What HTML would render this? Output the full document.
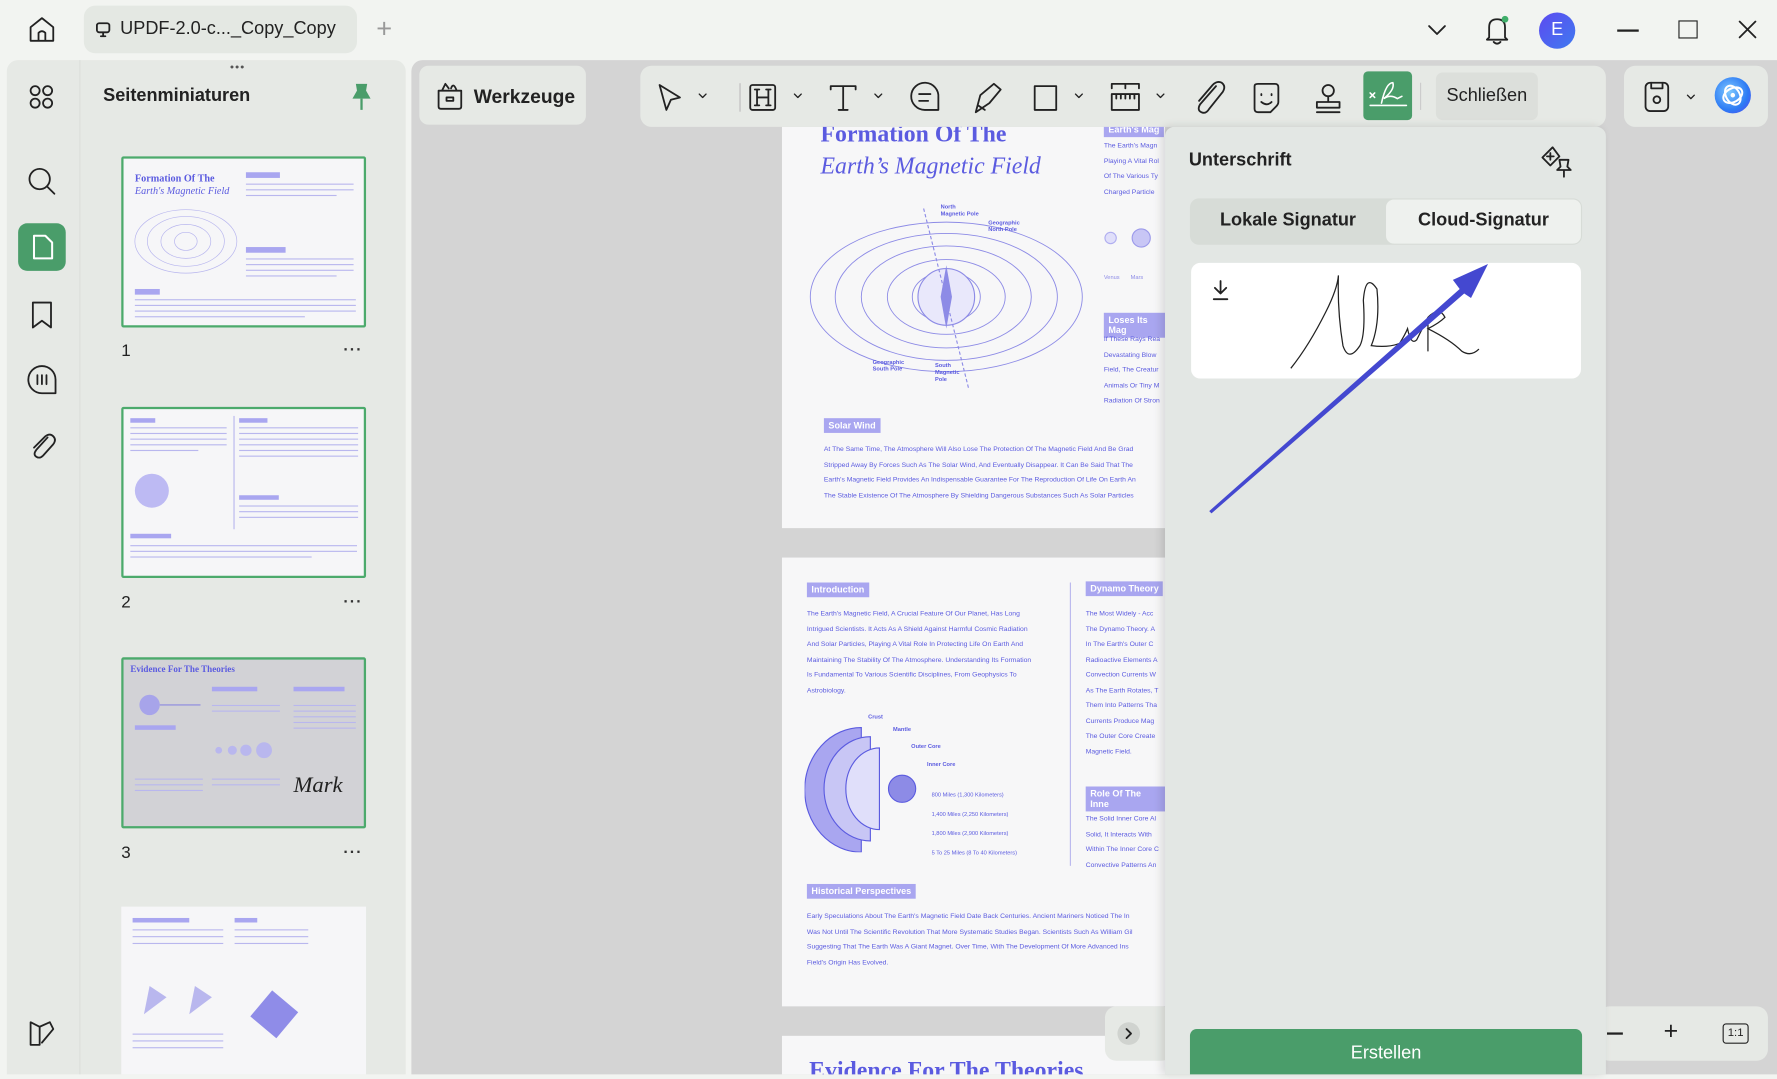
<!DOCTYPE html>
<html><head><meta charset="utf-8">
<style>
*{box-sizing:border-box;margin:0;padding:0}
html,body{width:1777px;height:1074px;overflow:hidden;background:#f2f4f1;font-family:"Liberation Sans",sans-serif}
#w{position:absolute;left:0;top:0;width:1568px;height:948px;transform:scale(1.13329);transform-origin:0 0;background:#f2f4f1}
.a{position:absolute}
.ic{stroke:#222;fill:none;stroke-width:1.6;stroke-linecap:round;stroke-linejoin:round}
.pt{color:#5b5be0;font-size:6px;line-height:13.5px}
.lbl{background:#a9a6f0;color:#fff;font-size:8px;font-weight:bold;padding:2px 4px}
.th{position:absolute;left:107px;width:216px;background:#f6f6f8;border:2px solid #4caa6c;border-radius:2px;overflow:hidden}
.ln{position:absolute;height:2px;background:#b9b7ee}
.num{position:absolute;left:107px;font-size:15px;color:#222}
.dots{position:absolute;left:303px;font-size:14px;color:#333;letter-spacing:1px;font-weight:bold}
</style></head><body><div id="w">
<!-- top bar -->
<svg class="a" style="left:24px;top:13px" width="26" height="26" viewBox="0 0 26 26"><path class="ic" d="M3 11 L13 3 L23 11 V23 H3 Z M10 23 V16 Q13 13 16 16 V23"/></svg>
<div class="a" style="left:74px;top:5px;width:241px;height:42px;background:#e4e8e3;border-radius:10px"></div>
<svg class="a" style="left:84px;top:19px" width="14" height="14" viewBox="0 0 14 14"><rect class="ic" x="1.5" y="1.5" width="11" height="8" rx="2" stroke-width="1.2"/><path class="ic" d="M7 10v3M5 13h4" stroke-width="1.2"/></svg>
<div class="a" style="left:106px;top:17px;font-size:16px;color:#222">UPDF-2.0-c..._Copy_Copy</div>
<div class="a" style="left:332px;top:12px;font-size:24px;color:#999;font-weight:300">+</div>
<svg class="a" style="left:1259px;top:20px" width="18" height="14"><path class="ic" d="M2 3l7 7 7-7" stroke-width="1.4"/></svg>
<svg class="a" style="left:1308px;top:12px" width="26" height="30" viewBox="0 0 26 30"><path class="ic" d="M6 21 V12 Q6 5 13 5 Q20 5 20 12 V21 L22 23 H4 Z M10 25 Q13 28 16 25" stroke-width="1.4"/><circle cx="20" cy="5" r="3" fill="#3fae6a"/></svg>
<div class="a" style="left:1358px;top:11px;width:32px;height:32px;border-radius:50%;background:linear-gradient(135deg,#5d4af0,#3f7af0);color:#fff;font-size:16px;text-align:center;line-height:32px">E</div>
<div class="a" style="left:1427px;top:26px;width:19px;height:1.5px;background:#222"></div>
<div class="a" style="left:1481px;top:18px;width:17px;height:16px;border:1.5px solid #222"></div>
<svg class="a" style="left:1533px;top:17px" width="18" height="18"><path class="ic" d="M2 2l14 14M16 2L2 16" stroke-width="1.4"/></svg>

<!-- left panel -->
<div class="a" style="left:6px;top:53px;width:352px;height:895px;background:#e6e9e5;border-radius:10px 10px 0 0"></div>
<div class="a" style="left:70px;top:53px;width:1px;height:895px;background:#dcdfdb"></div>
<svg class="a" style="left:24px;top:73px" width="26" height="26" viewBox="0 0 26 26"><g class="ic" stroke-width="1.4"><rect x="3" y="3" width="8" height="8" rx="4"/><rect x="14" y="3" width="8" height="8" rx="4"/><rect x="3" y="14" width="8" height="8" rx="4"/><rect x="14" y="14" width="8" height="8" rx="4"/></g></svg>
<svg class="a" style="left:23px;top:146px" width="28" height="28"><circle class="ic" cx="12" cy="12" r="9"/><path class="ic" d="M19 19l6 6"/></svg>
<div class="a" style="left:16px;top:197px;width:42px;height:42px;background:#4a9d6a;border-radius:8px"></div>
<svg class="a" style="left:25px;top:206px" width="24" height="24"><path d="M5 2H15L21 8V22H5Z" fill="none" stroke="#fff" stroke-width="1.8" stroke-linejoin="round"/></svg>
<svg class="a" style="left:26px;top:265px" width="22" height="26"><path class="ic" d="M3 2H19V24L11 18L3 24Z"/></svg>
<svg class="a" style="left:22px;top:320px" width="30" height="30"><path class="ic" d="M15 3A12 12 0 1 0 15 27H27V15A12 12 0 0 0 15 3ZM11 11V19M15 11V19M19 11V19"/></svg>
<svg class="a" style="left:24px;top:380px" width="28" height="28"><path class="ic" d="M18 6L8 17Q5 21 8 23Q11 25 14 22L23 12Q26 8 23 5Q20 2 16 5L6 15"/></svg>
<svg class="a" style="left:24px;top:898px" width="26" height="26"><path class="ic" d="M3 24V4L11 8V24ZM11 8L20 4L23 10L13 22"/></svg>
<div class="a" style="left:203px;top:54px;font-size:10px;color:#555;letter-spacing:1px">&#8226;&#8226;&#8226;</div>
<div class="a" style="left:91px;top:76px;font-size:16px;font-weight:bold;color:#222">Seitenminiaturen</div>
<svg class="a" style="left:309px;top:72px" width="20" height="26"><path d="M5 2H15L14 8L18 15H2L6 8Z" fill="#4a9d6a"/><path d="M10 15V25" stroke="#4a9d6a" stroke-width="2"/></svg>

<div class="th" style="top:138px;height:151px">
 <div class="a" style="left:10px;top:12px;color:#5b5be0;font:bold 9px 'Liberation Serif',serif">Formation Of The</div>
 <div class="a" style="left:10px;top:23px;color:#5b5be0;font:italic 9px 'Liberation Serif',serif">Earth's Magnetic Field</div>
 <svg class="a" style="left:5px;top:35px" width="100" height="75"><g fill="none" stroke="#b7b5ee" stroke-width="0.6"><ellipse cx="50" cy="38" rx="45" ry="28"/><ellipse cx="50" cy="38" rx="34" ry="22"/><ellipse cx="50" cy="38" rx="22" ry="15"/><ellipse cx="50" cy="38" rx="10" ry="8"/></g></svg>
 <div class="ln" style="left:108px;top:12px;width:30px;height:5px;background:#a9a6f0"></div>
 <div class="ln" style="left:108px;top:22px;width:95px;height:1px"></div><div class="ln" style="left:108px;top:27px;width:95px;height:1px"></div><div class="ln" style="left:108px;top:32px;width:80px;height:1px"></div>
 <div class="ln" style="left:108px;top:78px;width:35px;height:5px;background:#a9a6f0"></div>
 <div class="ln" style="left:108px;top:88px;width:95px;height:1px"></div><div class="ln" style="left:108px;top:93px;width:95px;height:1px"></div><div class="ln" style="left:108px;top:98px;width:95px;height:1px"></div><div class="ln" style="left:108px;top:103px;width:80px;height:1px"></div>
 <div class="ln" style="left:10px;top:115px;width:22px;height:5px;background:#a9a6f0"></div>
 <div class="ln" style="left:10px;top:124px;width:195px;height:1px"></div><div class="ln" style="left:10px;top:129px;width:195px;height:1px"></div><div class="ln" style="left:10px;top:134px;width:195px;height:1px"></div><div class="ln" style="left:10px;top:139px;width:150px;height:1px"></div>
</div>
<div class="num" style="top:301px">1</div><div class="dots" style="top:300px">···</div>
<div class="th" style="top:359px;height:151px">
 <div class="a" style="left:97px;top:6px;width:1px;height:100px;background:#b9b7ee"></div>
 <div class="ln" style="left:6px;top:8px;width:22px;height:4px;background:#a9a6f0"></div>
 <div class="ln" style="left:6px;top:16px;width:85px;height:1px"></div><div class="ln" style="left:6px;top:21px;width:85px;height:1px"></div><div class="ln" style="left:6px;top:26px;width:85px;height:1px"></div><div class="ln" style="left:6px;top:31px;width:85px;height:1px"></div><div class="ln" style="left:6px;top:36px;width:60px;height:1px"></div>
 <svg class="a" style="left:5px;top:52px" width="40" height="40"><circle cx="20" cy="20" r="15" fill="#bdbaf3"/></svg>
 <div class="ln" style="left:102px;top:8px;width:25px;height:4px;background:#a9a6f0"></div>
 <div class="ln" style="left:102px;top:16px;width:105px;height:1px"></div><div class="ln" style="left:102px;top:21px;width:105px;height:1px"></div><div class="ln" style="left:102px;top:26px;width:105px;height:1px"></div><div class="ln" style="left:102px;top:31px;width:105px;height:1px"></div><div class="ln" style="left:102px;top:36px;width:105px;height:1px"></div><div class="ln" style="left:102px;top:41px;width:105px;height:1px"></div>
 <div class="ln" style="left:102px;top:76px;width:35px;height:4px;background:#a9a6f0"></div>
 <div class="ln" style="left:102px;top:85px;width:105px;height:1px"></div><div class="ln" style="left:102px;top:90px;width:105px;height:1px"></div><div class="ln" style="left:102px;top:95px;width:105px;height:1px"></div>
 <div class="ln" style="left:6px;top:110px;width:36px;height:4px;background:#a9a6f0"></div>
 <div class="ln" style="left:6px;top:120px;width:200px;height:1px"></div><div class="ln" style="left:6px;top:125px;width:200px;height:1px"></div><div class="ln" style="left:6px;top:130px;width:160px;height:1px"></div>
</div>
<div class="num" style="top:523px">2</div><div class="dots" style="top:522px">···</div>
<div class="th" style="top:580px;height:151px;background:#d2d2d6">
 <div class="a" style="left:6px;top:4px;color:#5b5be0;font:bold 8px 'Liberation Serif',serif">Evidence For The Theories</div>
 <div class="ln" style="left:78px;top:24px;width:40px;height:4px;background:#a9a6f0"></div>
 <div class="ln" style="left:150px;top:24px;width:45px;height:4px;background:#a9a6f0"></div>
 <svg class="a" style="left:8px;top:28px" width="60" height="24"><circle cx="15" cy="12" r="9" fill="#a7a4ea"/><path d="M24 12H60" stroke="#8b88e0"/></svg>
 <div class="ln" style="left:10px;top:58px;width:36px;height:4px;background:#a9a6f0"></div>
 <svg class="a" style="left:78px;top:70px" width="60" height="20"><g fill="#b9b7ee"><circle cx="6" cy="10" r="3"/><circle cx="18" cy="10" r="4"/><circle cx="30" cy="10" r="5"/><circle cx="46" cy="10" r="7"/></g></svg>
 <div class="a" style="left:150px;top:100px;font:italic 20px 'Liberation Serif',serif;color:#222">Mark</div>
 <div class="ln" style="left:78px;top:40px;width:60px;height:1px"></div><div class="ln" style="left:78px;top:45px;width:60px;height:1px"></div><div class="ln" style="left:150px;top:40px;width:55px;height:1px"></div><div class="ln" style="left:150px;top:45px;width:55px;height:1px"></div><div class="ln" style="left:150px;top:50px;width:55px;height:1px"></div><div class="ln" style="left:150px;top:55px;width:55px;height:1px"></div><div class="ln" style="left:150px;top:60px;width:55px;height:1px"></div>
 <div class="ln" style="left:10px;top:105px;width:60px;height:1px"></div><div class="ln" style="left:10px;top:110px;width:60px;height:1px"></div><div class="ln" style="left:10px;top:115px;width:60px;height:1px"></div><div class="ln" style="left:78px;top:105px;width:60px;height:1px"></div><div class="ln" style="left:78px;top:110px;width:60px;height:1px"></div>
</div>
<div class="num" style="top:744px">3</div><div class="dots" style="top:743px">···</div>
<div class="a" style="left:107px;top:800px;width:216px;height:148px;background:#f6f6f8">
 <div class="ln" style="left:10px;top:10px;width:50px;height:4px;background:#a9a6f0"></div><div class="ln" style="left:100px;top:10px;width:20px;height:4px;background:#a9a6f0"></div>
 <div class="ln" style="left:10px;top:20px;width:80px;height:1px"></div><div class="ln" style="left:10px;top:26px;width:80px;height:1px"></div><div class="ln" style="left:10px;top:32px;width:80px;height:1px"></div><div class="ln" style="left:100px;top:20px;width:65px;height:1px"></div><div class="ln" style="left:100px;top:26px;width:65px;height:1px"></div><div class="ln" style="left:100px;top:32px;width:65px;height:1px"></div>
 <svg class="a" style="left:10px;top:60px" width="160" height="80"><g fill="#b9b7ee"><path d="M10 35L30 20L15 10Z"/><path d="M50 35L70 20L55 10Z"/><rect x="110" y="20" width="30" height="30" transform="rotate(40 125 35)" fill="#8f8ce8"/></g></svg>
 <div class="ln" style="left:10px;top:112px;width:80px;height:1px"></div><div class="ln" style="left:10px;top:118px;width:80px;height:1px"></div><div class="ln" style="left:10px;top:124px;width:80px;height:1px"></div>
</div>

<!-- main area -->
<div class="a" style="left:363px;top:53px;width:1205px;height:895px;background:#d4d4d4;border-radius:10px 0 0 0"></div>
<div class="a" style="left:370px;top:58px;width:147px;height:52px;background:#e6e9e5;border-radius:8px"></div>
<svg class="a" style="left:384px;top:70px" width="26" height="28"><path class="ic" d="M3 10H23V24Q23 26 21 26H5Q3 26 3 24ZM10 16H16V19H10ZM6 10L9 4L12 8M14 8Q16 2 19 10" stroke-width="1.4"/></svg>
<div class="a" style="left:418px;top:76px;font-size:17px;font-weight:bold;color:#222">Werkzeuge</div>

<div class="a" style="left:565px;top:58px;width:852px;height:54px;background:#e6e9e5;border-radius:10px"></div>
<svg class="a" style="left:575px;top:66px" width="800" height="40" viewBox="0 0 800 40">
<g class="ic" stroke-width="1.5">
<path d="M7 9L25 20L17 22L13 31Z"/><path d="M42 17l3 3 3-3" stroke-width="1.2"/>
<path d="M78 8V32" stroke="#ccc"/>
<rect x="87" y="9" width="22" height="22" rx="2"/><path d="M93 13V27M103 13V27M93 20H103M91 13H95M101 13H105M91 27H95M101 27H105"/><path d="M126 17l3 3 3-3" stroke-width="1.2"/>
<path d="M158 10H180M169 10V31M165 31H173M158 10V13M180 10V13"/><path d="M197 17l3 3 3-3" stroke-width="1.2"/>
<path d="M241 31A12 12 0 1 1 253 20V31ZM236 17H246M236 23H244"/>
<path d="M286 33L290 18L302 8L308 13L298 25ZM288 27L294 31"/>
<rect x="338" y="10" width="19" height="21"/><path d="M374 17l3 3 3-3" stroke-width="1.2"/>
<path d="M406 8H430M406 8V12M430 8V12M418 8V12M406 17H430V31H406ZM410 17V21M414 17V21M418 17V21M422 17V21M426 17V21"/><path d="M446 17l3 3 3-3" stroke-width="1.2"/>
<path d="M498 10L484 26Q481 31 485 33Q489 35 492 30L504 15Q507 10 503 7Q499 5 495 9L483 23"/>
<path d="M532 10Q532 8 535 8H550Q553 8 553 11V24Q553 26 551 28L546 33H535Q532 33 532 30ZM538 17V18M547 17V18M538 24Q543 28 547 24"/>
<circle cx="597" cy="14" r="5"/><path d="M597 19V24M587 24H607V29H587ZM587 33H607"/>
</g>
</svg>
<div class="a" style="left:1203px;top:63px;width:43px;height:43px;background:#4a9d6a;border-radius:4px"></div>
<svg class="a" style="left:1203px;top:63px" width="43" height="43"><g fill="none" stroke="#fff" stroke-width="1.4" stroke-linecap="round"><path d="M6 19l4 4M10 19l-4 4"/><path d="M16 28Q20 10 26 10Q28 16 18 24Q24 20 30 24L34 22"/><path d="M6 30H38"/></g></svg>
<div class="a" style="left:1253px;top:73px;width:1px;height:24px;background:#ccc"></div>
<div class="a" style="left:1267px;top:64px;width:90px;height:42px;background:#dcdfdb;border-radius:6px;font-size:16px;color:#222;text-align:center;line-height:42px">Schließen</div>

<div class="a" style="left:1433px;top:58px;width:127px;height:54px;background:#e6e9e5;border-radius:10px"></div>
<svg class="a" style="left:1448px;top:70px" width="60" height="30"><g class="ic" stroke-width="1.4"><rect x="4" y="3" width="20" height="25" rx="4"/><path d="M9 3V8H19V3"/><circle cx="14" cy="18" r="3"/><path d="M41 14l3 3 3-3" stroke-width="1.2"/></g></svg>
<div class="a" style="left:1513px;top:68px;width:32px;height:32px;border-radius:50%;background:radial-gradient(circle at 40% 40%,#7ec8ff,#2d7bf4 60%,#5a3ef0)"></div>
<svg class="a" style="left:1513px;top:68px" width="32" height="32"><g fill="none" stroke="#fff" stroke-width="1.8"><ellipse cx="16" cy="16" rx="9" ry="6" transform="rotate(-30 16 16)"/><ellipse cx="16" cy="16" rx="9" ry="6" transform="rotate(60 16 16)"/></g><circle cx="16" cy="16" r="2" fill="#fff"/></svg>

<!-- pages -->
<div class="a" style="left:690px;top:112px;width:338px;height:354px;background:#f7f7f8;overflow:hidden">
 <div class="a" style="left:34px;top:-6px;color:#5b5be0;font:bold 21px 'Liberation Serif',serif">Formation Of The</div>
 <div class="a" style="left:34px;top:22px;color:#5b5be0;font:italic 21px 'Liberation Serif',serif">Earth’s Magnetic Field</div>
 <svg class="a" style="left:20px;top:62px" width="260" height="180"><g fill="none" stroke="#8d8be6" stroke-width="0.8"><ellipse cx="125" cy="88" rx="120" ry="66"/><ellipse cx="125" cy="88" rx="98" ry="56"/><ellipse cx="125" cy="88" rx="75" ry="45"/><ellipse cx="125" cy="88" rx="52" ry="33"/><ellipse cx="125" cy="88" rx="30" ry="22"/></g><circle cx="125" cy="88" r="25" fill="#e9e8fb" stroke="#8d8be6"/><path d="M125 60L130 88L125 116L120 88Z" fill="#8d8be6"/><path d="M105 10L145 170" stroke="#8d8be6" stroke-dasharray="3 2"/></svg>
 <div class="a" style="left:140px;top:68px;font-size:5px;color:#5b5be0;font-weight:bold">North<br>Magnetic Pole</div>
 <div class="a" style="left:182px;top:82px;font-size:5px;color:#5b5be0;font-weight:bold">Geographic<br>North Pole</div>
 <div class="a" style="left:80px;top:205px;font-size:5px;color:#5b5be0;font-weight:bold">Geographic<br>South Pole</div>
 <div class="a" style="left:135px;top:208px;font-size:5px;color:#5b5be0;font-weight:bold">South<br>Magnetic<br>Pole</div>
 <div class="a lbl" style="left:37px;top:257px">Solar Wind</div>
 <div class="a pt" style="left:37px;top:279px;width:320px">At The Same Time, The Atmosphere Will Also Lose The Protection Of The Magnetic Field And Be Grad<br>Stripped Away By Forces Such As The Solar Wind, And Eventually Disappear. It Can Be Said That The<br>Earth's Magnetic Field Provides An Indispensable Guarantee For The Reproduction Of Life On Earth An<br>The Stable Existence Of The Atmosphere By Shielding Dangerous Substances Such As Solar Particles</div>
 <div class="a lbl" style="left:284px;top:-4px">Earth's Mag</div>
 <div class="a pt" style="left:284px;top:11px">The Earth's Magn<br>Playing A Vital Rol<br>Of The Various Ty<br>Charged Particle</div>
 <svg class="a" style="left:284px;top:88px" width="60" height="20"><circle cx="6" cy="10" r="5" fill="#e0dffa" stroke="#b0aef0"/><circle cx="33" cy="10" r="8" fill="#c8c6f5" stroke="#9c9aea"/></svg>
 <div class="a" style="left:284px;top:130px;font-size:5px;color:#8d8be6">Venus&nbsp;&nbsp;&nbsp;&nbsp;&nbsp;&nbsp;&nbsp;Mars</div>
 <div class="a lbl" style="left:284px;top:164px">Loses Its Mag</div>
 <div class="a pt" style="left:284px;top:182px">If These Rays Rea<br>Devastating Blow<br>Field, The Creatur<br>Animals Or Tiny M<br>Radiation Of Stron</div>
</div>
<div class="a" style="left:690px;top:492px;width:338px;height:396px;background:#f7f7f8;overflow:hidden">
 <div class="a lbl" style="left:22px;top:22px">Introduction</div>
 <div class="a pt" style="left:22px;top:44px">The Earth's Magnetic Field, A Crucial Feature Of Our Planet, Has Long<br>Intrigued Scientists. It Acts As A Shield Against Harmful Cosmic Radiation<br>And Solar Particles, Playing A Vital Role In Protecting Life On Earth And<br>Maintaining The Stability Of The Atmosphere. Understanding Its Formation<br>Is Fundamental To Various Scientific Disciplines, From Geophysics To<br>Astrobiology.</div>
 <svg class="a" style="left:20px;top:140px" width="110" height="120"><path d="M50 10A50 55 0 0 0 50 120Z" fill="#a9a6f0" stroke="#5b5be0"/><path d="M58 18A40 45 0 0 0 58 110Z" fill="#c8c6f5" stroke="#5b5be0"/><path d="M66 28A28 34 0 0 0 66 100Z" fill="#e0dffa" stroke="#5b5be0"/><circle cx="86" cy="64" r="12" fill="#8d8be6" stroke="#5b5be0"/></svg>
 <div class="a" style="left:76px;top:138px;font-size:5px;color:#5b5be0;font-weight:bold">Crust</div>
 <div class="a" style="left:98px;top:149px;font-size:5px;color:#5b5be0;font-weight:bold">Mantle</div>
 <div class="a" style="left:114px;top:164px;font-size:5px;color:#5b5be0;font-weight:bold">Outer Core</div>
 <div class="a" style="left:128px;top:180px;font-size:5px;color:#5b5be0;font-weight:bold">Inner Core</div>
 <div class="a" style="left:132px;top:202px;font-size:5px;color:#5b5be0;line-height:17px">800 Miles (1,300 Kilometers)<br>1,400 Miles (2,250 Kilometers)<br>1,800 Miles (2,900 Kilometers)<br>5 To 25 Miles (8 To 40 Kilometers)</div>
 <div class="a" style="left:254px;top:22px;width:1px;height:250px;background:#b9b7ee"></div>
 <div class="a lbl" style="left:268px;top:21px">Dynamo Theory</div>
 <div class="a pt" style="left:268px;top:44px">The Most Widely - Acc<br>The Dynamo Theory. A<br>In The Earth's Outer C<br>Radioactive Elements A<br>Convection Currents W<br>As The Earth Rotates, T<br>Them Into Patterns Tha<br>Currents Produce Mag<br>The Outer Core Create<br>Magnetic Field.</div>
 <div class="a lbl" style="left:268px;top:202px">Role Of The Inne</div>
 <div class="a pt" style="left:268px;top:225px">The Solid Inner Core Al<br>Solid, It Interacts With<br>Within The Inner Core C<br>Convective Patterns An</div>
 <div class="a lbl" style="left:22px;top:288px">Historical Perspectives</div>
 <div class="a pt" style="left:22px;top:311px;width:330px">Early Speculations About The Earth's Magnetic Field Date Back Centuries. Ancient Mariners Noticed The In<br>Was Not Until The Scientific Revolution That More Systematic Studies Began. Scientists Such As William Gil<br>Suggesting That The Earth Was A Giant Magnet. Over Time, With The Development Of More Advanced Ins<br>Field's Origin Has Evolved.</div>
</div>
<div class="a" style="left:690px;top:914px;width:338px;height:34px;background:#f7f7f8;overflow:hidden">
 <div class="a" style="left:24px;top:18px;color:#5b5be0;font:bold 21px 'Liberation Serif',serif">Evidence For The Theories</div>
</div>
<!-- bottom bars -->
<div class="a" style="left:975px;top:888px;width:60px;height:48px;background:#e6e9e5;border-radius:10px"></div>
<div class="a" style="left:986px;top:902px;width:20px;height:20px;border-radius:50%;background:#d0d3cf"></div>
<svg class="a" style="left:986px;top:902px" width="20" height="20"><path class="ic" d="M8 6l4 4-4 4" stroke-width="1.4"/></svg>
<div class="a" style="left:1410px;top:888px;width:150px;height:48px;background:#e6e9e5;border-radius:10px"></div>
<div class="a" style="left:1418px;top:911px;width:14px;height:1.5px;background:#222"></div>
<div class="a" style="left:1468px;top:897px;font-size:22px;color:#222">+</div>
<div class="a" style="left:1520px;top:903px;width:23px;height:18px;border:1.4px solid #222;border-radius:3px;font-size:10px;text-align:center;line-height:15px;color:#222">1:1</div>

<!-- signature panel -->
<div class="a" style="left:1028px;top:112px;width:389px;height:836px;background:#e3e7e4;border-radius:8px 8px 0 0;box-shadow:-3px 0 8px rgba(0,0,0,.12)"></div>
<div class="a" style="left:1049px;top:133px;font-size:16px;font-weight:bold;color:#222">Unterschrift</div>
<svg class="a" style="left:1358px;top:128px" width="34" height="30"><g class="ic" stroke-width="1.3"><path d="M12 2L3 11L10 18L18 10Z"/><path d="M10 7V13M7 10H13"/><path d="M18 13H26L25 19L28 22H16L19 19ZM22 22V28"/></g></svg>
<div class="a" style="left:1050px;top:175px;width:346px;height:41px;background:#d7dcd7;border-radius:8px"></div>
<div class="a" style="left:1223px;top:176px;width:172px;height:39px;background:#eef1ee;border-radius:7px"></div>
<div class="a" style="left:1050px;top:186px;width:173px;text-align:center;font-size:16px;font-weight:bold;color:#222">Lokale Signatur</div>
<div class="a" style="left:1223px;top:186px;width:172px;text-align:center;font-size:16px;font-weight:bold;color:#222">Cloud-Signatur</div>
<div class="a" style="left:1051px;top:232px;width:344px;height:102px;background:#fff;border-radius:8px"></div>
<svg class="a" style="left:1068px;top:246px" width="18" height="20"><path class="ic" d="M9 2V13M4 8L9 13L14 8M3 18H15" stroke-width="1.3"/></svg>
<svg class="a" style="left:1130px;top:235px" width="190" height="100"><path d="M9 90Q25 70 40 40Q50 20 51 8Q50 40 55 70Q60 85 70 70Q75 60 73 30Q75 5 85 20Q88 50 80 70Q95 72 105 68Q110 60 112 55Q115 70 120 65Q125 55 130 45V75M130 45Q140 35 145 45Q140 50 130 55Q150 65 160 75Q168 80 175 73" fill="none" stroke="#222" stroke-width="1.1"/></svg>
<svg class="a" style="left:1060px;top:225px" width="260" height="235"><path d="M7 226L228 30L222 22L253 8L238 38L232 34L9 228Z" fill="#4448d0"/></svg>
<div class="a" style="left:1050px;top:908px;width:346px;height:40px;background:#4a9d6a;border-radius:6px 6px 0 0;color:#fff;font-size:16px;text-align:center;line-height:44px">Erstellen</div>
</div></body></html>
